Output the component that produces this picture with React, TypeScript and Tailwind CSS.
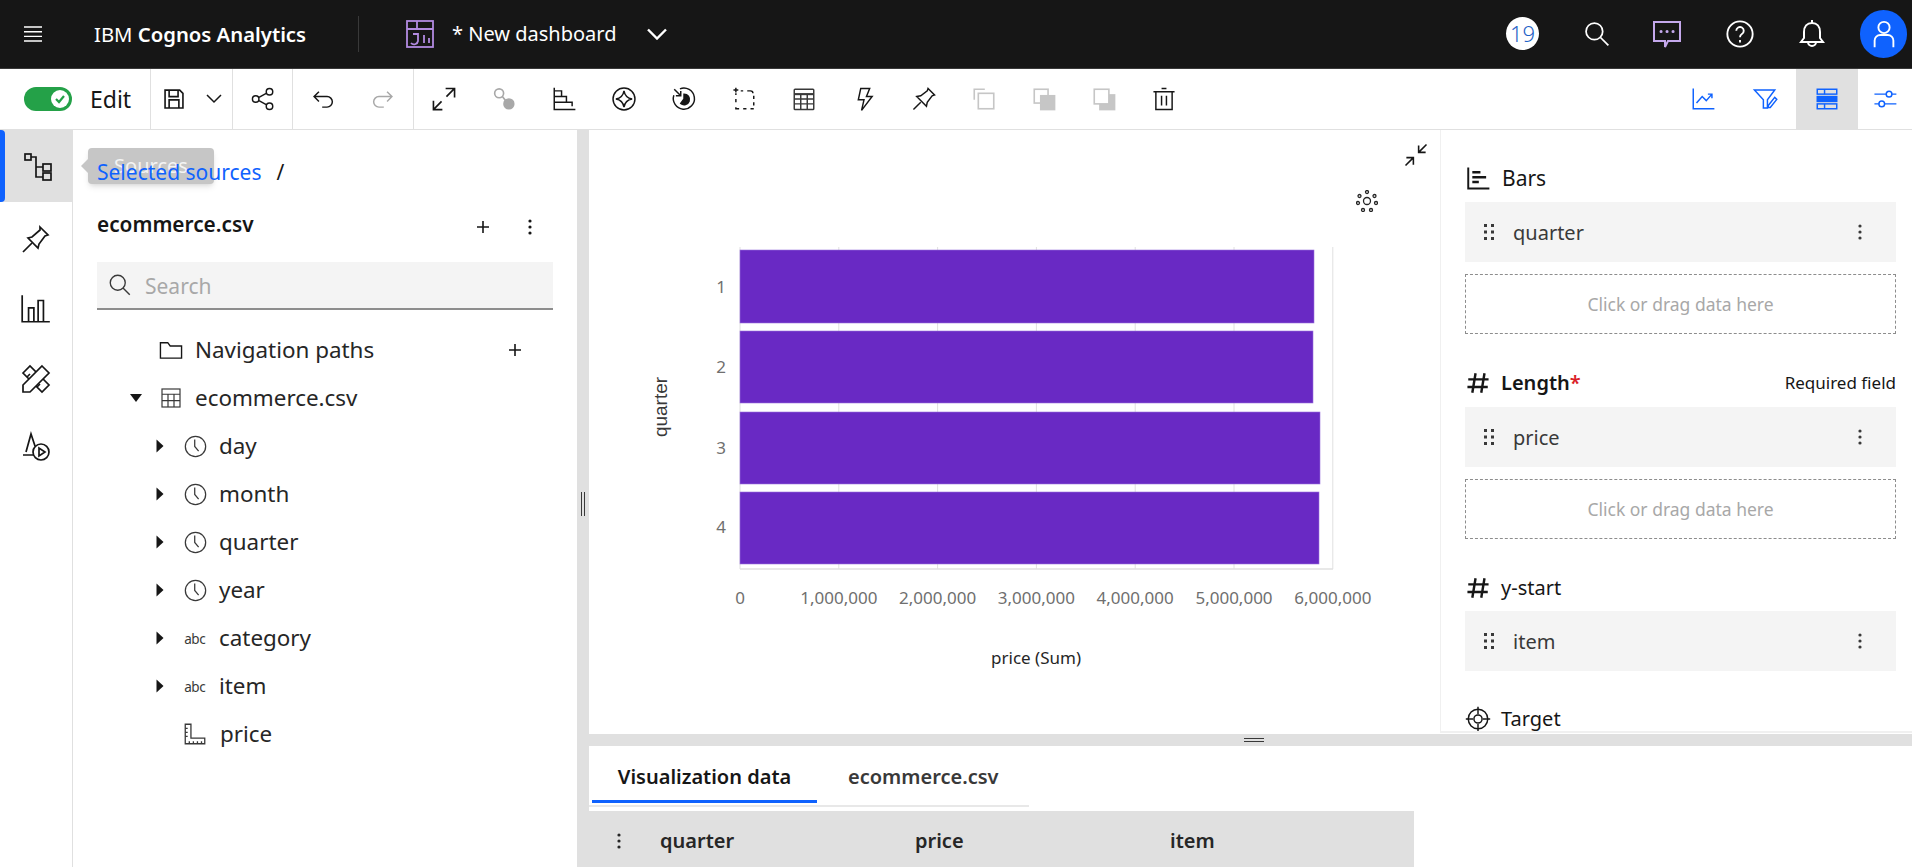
import type { ReactNode } from "react";

function Ico({ size = 26, className = "", sw = 2, children }: { size?: number; className?: string; sw?: number; children: ReactNode }) {
  return (
    <svg width={size} height={size} viewBox="0 0 32 32" fill="none" stroke="currentColor" strokeWidth={sw} className={className}>
      {children}
    </svg>
  );
}

function ToolBtn({ children, active, wide }: { children: ReactNode; active?: boolean; wide?: boolean }) {
  return <div className={`${wide ? "w-[62px]" : "w-[60px]"} h-[60px] shrink-0 flex items-center justify-center ${active ? "bg-[#e0e0e0]" : ""}`}>{children}</div>;
}

const Kebab = ({ className = "" }: { className?: string }) => (
  <svg width="4" height="16" viewBox="0 0 4 16" fill="currentColor" className={className}>
    <circle cx="2" cy="2" r="1.6" />
    <circle cx="2" cy="8" r="1.6" />
    <circle cx="2" cy="14" r="1.6" />
  </svg>
);

const Plus = () => (
  <svg width="14" height="14" viewBox="0 0 14 14" stroke="currentColor" strokeWidth="1.6">
    <path d="M7 1v12M1 7h12" />
  </svg>
);

const Hash = () => (
  <Ico size={26} sw={3}>
    <path d="M13 4 9 28M24 4l-4 24M4 11.500h25M3 21h25" />
  </Ico>
);

const Clock = () => (
  <Ico size={25} sw={1.6} className="text-[#393939]">
    <circle cx="16" cy="16" r="13" />
    <path d="M15 7v9l5 6" />
  </Ico>
);

function Caret({ open }: { open?: boolean }) {
  return (
    <svg width="16" height="16" viewBox="0 0 16 16" fill="#161616">
      {open ? <path d="M2 4h12l-6 8z" /> : <path d="M4.500 1.500v13l7-6.500z" />}
    </svg>
  );
}

const Abc = () => <span className="text-[15px] leading-none text-[#393939] tracking-[-0.5px] scale-x-90">abc</span>;

const RulerIcon = () => (
  <Ico size={26} sw={1.6} className="text-[#393939]">
    <path d="M4 4h7v17h17v7H4z" />
    <path d="M4 9h3M4 14h3M4 19h3M9 28v-3M14 28v-3M19 28v-3M24 28v-3" />
  </Ico>
);

const TableIcon = () => (
  <Ico size={24} sw={1.6} className="text-[#393939]">
    <rect x="4" y="4" width="24" height="24" />
    <path d="M4 11h24M4 19.500h24M12 11v17M20 11v17" />
  </Ico>
);

function TreeRow({ indent, caret, icon, label, labelClass, right }: { indent: string; caret?: "open" | "closed"; icon: ReactNode; label: string; labelClass?: string; right?: ReactNode }) {
  return (
    <div className={`h-12 flex items-center ${indent}`}>
      <div className="w-4 flex justify-center">{caret && <Caret open={caret === "open"} />}</div>
      <div className="w-[26px] ml-[14px] flex justify-center">{icon}</div>
      <span className={`text-[22.4px] text-[#262626] ${labelClass ?? "ml-[11px]"}`}>{label}</span>
      {right}
    </div>
  );
}

function FieldCard({ label }: { label: string }) {
  return (
    <div className="h-[60px] bg-[#f4f4f4] flex items-center pl-[19px] pr-[34px] text-[#393939]">
      <svg width="10" height="16" viewBox="0 0 10 16" fill="currentColor">
        <rect x="0" y="0" width="3" height="3" />
        <rect x="7" y="0" width="3" height="3" />
        <rect x="0" y="6.500" width="3" height="3" />
        <rect x="7" y="6.500" width="3" height="3" />
        <rect x="0" y="13" width="3" height="3" />
        <rect x="7" y="13" width="3" height="3" />
      </svg>
      <span className="ml-[19px] pt-[2px] text-[20px]">{label}</span>
      <Kebab className="ml-auto" />
    </div>
  );
}

const DropZone = () => (
  <div className="h-[60px] mt-3 border border-dashed border-[#8d8d8d] flex items-center justify-center text-[17.5px] text-[#a8a8a8]">Click or drag data here</div>
);

const bars = [
  { y: 120, h: 73, w: 574, label: "1", labelY: 163 },
  { y: 201, h: 72, w: 573, label: "2", labelY: 243 },
  { y: 282, h: 72, w: 580, label: "3", labelY: 324 },
  { y: 362, h: 72, w: 579, label: "4", labelY: 403 },
];
const ticks = ["0", "1,000,000", "2,000,000", "3,000,000", "4,000,000", "5,000,000", "6,000,000"];

function BarChart() {
  return (
    <svg width="852" height="604" className="block" fontFamily="'Noto Sans', sans-serif">
      {ticks.map((t, i) => {
        const x = 151 + i * 98.8;
        return (
          <g key={t}>
            <line x1={x} x2={x} y1={117} y2={439} stroke="#e0e0e0" />
            <text x={x} y={474} textAnchor="middle" fontSize="17" fill="#6f6f6f">{t}</text>
          </g>
        );
      })}
      <line x1={151} x2={744} y1={439} y2={439} stroke="#e0e0e0" strokeWidth="1.500" />
      {bars.map((b) => (
        <g key={b.label}>
          <rect x={151} y={b.y} width={b.w} height={b.h} fill="#6929c4" stroke="#9a72dc" strokeWidth="0.600" />
          <text x={137} y={b.labelY} textAnchor="end" fontSize="17" fill="#6f6f6f">{b.label}</text>
        </g>
      ))}
      <text x={447} y={534} textAnchor="middle" fontSize="17" fill="#262626">price (Sum)</text>
      <text transform="translate(78 277) rotate(-90)" textAnchor="middle" fontSize="19" fill="#393939" fontFamily="'Liberation Sans', sans-serif">quarter</text>
    </svg>
  );
}

export default function App() {
  return (
    <div className="h-screen w-[1912px] overflow-hidden flex flex-col bg-white text-[#161616] font-['Noto_Sans',sans-serif]">
      {/* Top bar */}
      <header className="h-[69px] shrink-0 bg-[#161616] border-b border-[#393939] flex items-center text-white">
        <svg width="18" height="16" viewBox="0 0 18 16" stroke="currentColor" strokeWidth="1.400" className="ml-6">
          <path d="M0 1h18M0 5.700h18M0 10.400h18M0 15h18" />
        </svg>
        <div className="ml-[52px] text-[20.3px] w-[212px] whitespace-nowrap">IBM <span className="font-semibold">Cognos Analytics</span></div>
        <div className="ml-[52px] w-px h-9 bg-[#393939]" />
        <Ico size={32} className="ml-[45px] text-[#b28ae0]" sw={1.8}>
          <rect x="3" y="3" width="26" height="26" />
          <path d="M3 11h26M13 3v8M9 16h5v7a4 4 0 0 1-7 2M20 17v8M25 20v5" />
        </Ico>
        <span className="ml-[16px] text-[20px] whitespace-nowrap">* New dashboard</span>
        <svg width="20" height="12" viewBox="0 0 20 12" fill="none" stroke="currentColor" strokeWidth="2.400" className="ml-[31px]">
          <path d="M1 1.500 10 10.500 19 1.500" />
        </svg>
        <div className="ml-auto flex items-center">
          <div className="w-[33px] h-[33px] -mt-[2px] rounded-full bg-white text-[#1f63c7] text-[22px] font-light flex items-center justify-center">19</div>
          <Ico size={28} className="ml-[44px]">
            <circle cx="13" cy="13" r="9.500" />
            <path d="m20 20 9 9" />
          </Ico>
          <Ico size={32} className="ml-[40px] text-[#c4a8ec]">
            <path d="M3 4h26v19H17l-3 6v-6H3z" />
            <path d="M10 13.500h.1M16 13.500h.1M22 13.500h.1" strokeWidth="3" strokeLinecap="round" />
          </Ico>
          <Ico size={30} className="ml-[42px]">
            <circle cx="16" cy="16" r="13.500" />
            <path d="M12 12.500a4 4 0 1 1 6 3.500c-1.500 1-2 1.700-2 3.500M16 22.500v2.500" />
          </Ico>
          <Ico size={32} className="ml-[41px]">
            <path d="M16 2v3M16 5c-5 0-8 3.500-8 9v6l-3 4h22l-3-4v-6c0-5.500-3-9-8-9z" />
            <path d="M12 24a4 4 0 0 0 8 0" />
          </Ico>
          <div className="ml-[32px] mr-[5px] w-[47px] h-[48px] rounded-full bg-[#0f62fe] flex items-center justify-center">
            <Ico size={30}>
              <circle cx="16" cy="9" r="6" />
              <path d="M6 30v-7a6 6 0 0 1 6-6h8a6 6 0 0 1 6 6v7" />
            </Ico>
          </div>
        </div>
      </header>

      {/* Toolbar */}
      <div className="h-[61px] shrink-0 border-b border-[#e0e0e0] flex items-stretch text-[#161616]">
        <div className="w-[151px] shrink-0 border-r border-[#e0e0e0] flex items-center pl-6">
          <div className="w-12 h-6 rounded-full bg-[#24a148] flex items-center justify-end pr-[3px]">
            <div className="w-[18px] h-[18px] rounded-full bg-white flex items-center justify-center">
              <svg width="12" height="12" viewBox="0 0 12 12" fill="none" stroke="#24a148" strokeWidth="2.200">
                <path d="m2 6 3 3 5-6" />
              </svg>
            </div>
          </div>
          <span className="ml-[18px] text-[23px]">Edit</span>
        </div>
        <div className="w-[82px] shrink-0 border-r border-[#e0e0e0] flex items-center">
          <Ico className="ml-[10px]">
            <path d="M5 5h18l4 4v18H5z" />
            <path d="M10 5v8h11V5M10 27V17h12v10" />
          </Ico>
          <svg width="16" height="10" viewBox="0 0 16 10" fill="none" stroke="currentColor" strokeWidth="1.500" className="ml-[19px]">
            <path d="m1 1 7 7 7-7" />
          </svg>
        </div>
        <div className="w-[60px] shrink-0 border-r border-[#e0e0e0] flex items-center justify-center">
          <Ico sw={1.8}>
            <circle cx="24" cy="7" r="4" />
            <circle cx="7" cy="16" r="4" />
            <circle cx="24" cy="25" r="4" />
            <path d="m11 14 9-5M11 18l9 5" />
          </Ico>
        </div>
        <div className="w-[121px] shrink-0 border-r border-[#e0e0e0] flex items-center">
          <ToolBtn>
            <Ico sw={1.8}>
              <path d="M11 7 5 13l6 6M5 13h16a6 6 0 0 1 0 13h-6" />
            </Ico>
          </ToolBtn>
          <ToolBtn>
            <Ico sw={1.8} className="text-[#a8a8a8]">
              <path d="m21 7 6 6-6 6M27 13H11a6 6 0 0 0 0 13h6" />
            </Ico>
          </ToolBtn>
        </div>
        <ToolBtn>
          <Ico>
            <path d="m3 29 10-10M19 13 29 3M18 3h11v11M3 18v11h11" />
          </Ico>
        </ToolBtn>
        <ToolBtn>
          <Ico className="text-[#a8a8a8]">
            <circle cx="10" cy="9" r="5.500" />
            <path d="m14 13 4 5" />
            <circle cx="22" cy="22" r="6" fill="currentColor" />
          </Ico>
        </ToolBtn>
        <ToolBtn>
          <Ico sw={1.8}>
            <path d="M4 2v27h26" />
            <path d="M4 6h9v7H4M4 13h15v7H4M4 20h22v5" />
          </Ico>
        </ToolBtn>
        <ToolBtn>
          <Ico sw={1.8}>
            <circle cx="16" cy="16" r="13.500" />
            <path d="M16 6c1 6 4 9 10 10-6 1-9 4-10 10-1-6-4-9-10-10 6-1 9-4 10-10z" />
          </Ico>
        </ToolBtn>
        <ToolBtn>
          <Ico sw={1.8}>
            <path d="M11 3.500a13 13 0 1 1-7.500 8" />
            <path d="m4 4 8 8M12 6v6H6" />
            <path d="M16 10a6.500 6.500 0 1 1-4 11.500L16 16z" fill="currentColor" />
          </Ico>
        </ToolBtn>
        <ToolBtn>
          <Ico sw={1.8}>
            <path d="M3 5h6M6 2v6" />
            <path d="M12 6h3M20 6h4a3 3 0 0 1 3 3M28 12v4M28 20v4M28 28h-4M19 28h-4M10 28H6v-2M6 20v-4M6 11V9" />
          </Ico>
        </ToolBtn>
        <ToolBtn>
          <Ico sw={1.8} className="text-[#393939]">
            <rect x="4" y="4" width="24" height="25" rx="1" />
            <path d="M4 10h24" strokeWidth="2.600" />
            <path d="M4 16h24M4 22h24M12 10v19M20 10v19" />
          </Ico>
        </ToolBtn>
        <ToolBtn>
          <Ico sw={1.8}>
            <path d="M12 3h11l-4 10h7L13 30l3-13h-7z" />
          </Ico>
        </ToolBtn>
        <ToolBtn>
          <Ico sw={1.8}>
            <path d="m21 3 8 8-3 1-6 8-1 5-12-12 5-1 8-6z" />
            <path d="M3 29l9-9" />
          </Ico>
        </ToolBtn>
        <ToolBtn>
          <Ico className="text-[#c6c6c6]">
            <path d="M4 17V4h13" />
            <rect x="9" y="9" width="19" height="19" />
          </Ico>
        </ToolBtn>
        <ToolBtn>
          <Ico className="text-[#c6c6c6]">
            <rect x="4" y="4" width="17" height="17" />
            <rect x="12" y="12" width="17" height="17" fill="currentColor" />
          </Ico>
        </ToolBtn>
        <ToolBtn>
          <Ico className="text-[#c6c6c6]">
            <rect x="11" y="11" width="18" height="18" fill="currentColor" />
            <rect x="4" y="4" width="18" height="18" fill="#fff" />
          </Ico>
        </ToolBtn>
        <ToolBtn>
          <Ico sw={1.8}>
            <path d="M3 7h26M13 3h6M6 7v22h20V7M13 12v12M19 12v12" />
          </Ico>
        </ToolBtn>
        <div className="ml-auto flex items-center text-[#0f62fe]">
          <ToolBtn wide>
            <Ico sw={1.8}>
              <path d="M4 3v25h26" />
              <path d="m8 21 7-8 5 5 7-8M22 10h5v5" />
            </Ico>
          </ToolBtn>
          <ToolBtn wide>
            <Ico sw={1.8}>
              <path d="M3 5h25l-9 12v10h-5V17z" />
              <path d="m20 24 8-10 2.500 2.500-8 10H20z" fill="#fff" />
            </Ico>
          </ToolBtn>
          <ToolBtn wide active>
            <Ico sw={1.8}>
              <rect x="4" y="4" width="24" height="6" />
              <rect x="4" y="13" width="24" height="6" fill="currentColor" />
              <rect x="4" y="22" width="24" height="6" />
              <path d="M13 4v6M13 22v6" />
            </Ico>
          </ToolBtn>
          <div className="w-[54px] h-[60px] flex items-center justify-center">
            <Ico sw={1.8}>
              <path d="M3 10h15M24 10h6M3 22h6M15 22h15" />
              <circle cx="21" cy="10" r="3.500" />
              <circle cx="12" cy="22" r="3.500" />
            </Ico>
          </div>
        </div>
      </div>

      <div className="flex-1 flex min-h-0">
        {/* Left rail */}
        <nav className="w-[73px] shrink-0 border-r border-[#e0e0e0] flex flex-col">
          <div className="relative h-[72px] bg-[#e0e0e0] flex items-center justify-center pl-[5px]">
            <div className="absolute left-0 top-0 h-full w-[5px] bg-[#0f62fe] rounded-r-sm" />
            <Ico size={32} sw={1.7}>
              <rect x="2" y="4" width="6" height="6" />
              <rect x="20" y="14" width="8" height="7" />
              <rect x="20" y="23" width="8" height="7" />
              <path d="M8 7h5v20h7M13 17h7" />
            </Ico>
          </div>
          <div className="h-[70px] mt-[2px] flex items-center justify-center">
            <Ico size={32} sw={1.7}>
              <path d="m20 4 8 8-3 1-6 8-1 4-10-10 4-1 8-7z" />
              <path d="m3 29 9-9" />
            </Ico>
          </div>
          <div className="h-[70px] flex items-center justify-center">
            <Ico size={34} sw={1.6}>
              <path d="M3 3v25h26M9 28V15h5v13M18 28V8h5v20" />
            </Ico>
          </div>
          <div className="h-[70px] flex items-center justify-center">
            <Ico size={32} sw={1.7}>
              <path d="M3 10 10 3l19 19-7 7zM7 14l3-3M12 19l3-3M17 24l3-3" />
              <path d="M22 3l7 7-19 19H3v-7z" fill="#fff" />
            </Ico>
          </div>
          <div className="h-[70px] -mt-[3px] flex items-center justify-center">
            <Ico size={32} sw={1.7}>
              <path d="M3 25h12M6 22 11 4l4 12" />
              <circle cx="21" cy="22" r="8" fill="#fff" />
              <path d="M19 18v8l6-4z" />
            </Ico>
          </div>
        </nav>

        {/* Source panel */}
        <aside className="relative w-[504px] shrink-0 pl-6 pr-6 flex flex-col">
          <div className="absolute left-[15px] top-[18px] w-[126px] h-9 bg-[#c6c6c6] rounded-sm shadow-md flex items-center justify-center text-[20px] text-[#f4f4f4]">
            <div className="absolute -left-[7px] top-[11px] w-0 h-0 border-y-[7px] border-y-transparent border-r-[7px] border-r-[#c6c6c6]" />
            Sources
          </div>
          <div className="relative h-10 mt-[23px] flex items-center text-[21px]">
            <span className="text-[#0f62fe]">Selected sources</span>
            <span className="ml-[15px]">/</span>
          </div>
          <div className="h-10 mt-3 flex items-center">
            <span className="text-[20.8px] font-semibold">ecommerce.csv</span>
            <div className="ml-auto mr-[21px] pt-[4px] flex items-center gap-[38px]">
              <Plus />
              <Kebab />
            </div>
          </div>
          <div className="h-12 mt-[17px] bg-[#f4f4f4] border-b-2 border-[#8d8d8d] flex items-center pl-[11px]">
            <Ico size={24} sw={1.8} className="text-[#393939]">
              <circle cx="13" cy="13" r="10" />
              <path d="m20 20 9 9" />
            </Ico>
            <span className="ml-[13px] pt-[3px] text-[21px] text-[#a8a8a8]">Search</span>
          </div>
          <div className="mt-4">
            <TreeRow
              indent="pl-[31px]"
              icon={
                <Ico size={26} sw={1.700}>
                  <path d="M3 7h9l3 4h14v15H3z" />
                </Ico>
              }
              label="Navigation paths"
              right={
                <div className="ml-auto mr-[31px]">
                  <Plus />
                </div>
              }
            />
            <TreeRow indent="pl-[31px]" caret="open" icon={<TableIcon />} label="ecommerce.csv" />
            <TreeRow indent="pl-[55px]" caret="closed" icon={<Clock />} label="day" />
            <TreeRow indent="pl-[55px]" caret="closed" icon={<Clock />} label="month" />
            <TreeRow indent="pl-[55px]" caret="closed" icon={<Clock />} label="quarter" />
            <TreeRow indent="pl-[55px]" caret="closed" icon={<Clock />} label="year" />
            <TreeRow indent="pl-[55px]" caret="closed" icon={<Abc />} label="category" />
            <TreeRow indent="pl-[55px]" caret="closed" icon={<Abc />} label="item" />
            <TreeRow indent="pl-[55px]" icon={<RulerIcon />} label="price" labelClass="ml-[12px]" />
          </div>
        </aside>

        {/* Vertical splitter */}
        <div className="w-3 shrink-0 bg-[#e0e0e0] pt-[362px] pl-[4px]">
          <div className="w-[4px] h-6 border-x border-[#393939]" />
        </div>

        <div className="flex-1 min-w-0 flex flex-col">
          <div className="h-[604px] shrink-0 flex">
            {/* Chart */}
            <div className="relative w-[851px] shrink-0 overflow-hidden">
              <BarChart />
              <div className="absolute left-[813px] top-[11px]">
                <Ico size={28} sw={1.800}>
                  <path d="m4 28 9-9M13 27v-8H5M28 4l-9 9M19 5v8h8" />
                </Ico>
              </div>
              <div className="absolute left-[767px] top-[60px]">
                <svg width="22" height="22" viewBox="0 0 22 22" fill="none" stroke="#262626" strokeWidth="1.300">
                  <circle cx="11" cy="11" r="3.500" />
                  <circle cx="11" cy="2" r="1.500" />
                  <circle cx="3.500" cy="6" r="1.500" />
                  <circle cx="18.500" cy="6" r="1.500" />
                  <circle cx="2" cy="13" r="1.500" />
                  <circle cx="20" cy="13" r="1.500" />
                  <circle cx="7" cy="20" r="1.500" />
                  <circle cx="15" cy="20" r="1.500" />
                </svg>
              </div>
            </div>

            {/* Properties */}
            <section className="flex-1 min-w-0 h-[603px] overflow-hidden border-l border-b-2 border-[#f0f0f0] pl-6 pr-4 pt-7">
              <div className="h-10 flex items-center text-[21px]">
                <Ico size={26}>
                  <path d="M4 3v26h26" strokeWidth="2.400" />
                  <path d="M9 9h10M9 15h17M9 21h8" strokeWidth="3" />
                </Ico>
                <span className="ml-[11px] pt-[2px]">Bars</span>
              </div>
              <div className="mt-1">
                <FieldCard label="quarter" />
                <DropZone />
              </div>
              <div className="h-10 mt-[29px] flex items-center text-[20px]">
                <Hash />
                <span className="ml-[10px] font-semibold">Length<span className="text-[#da1e28]">*</span></span>
                <span className="ml-auto text-[17px]">Required field</span>
              </div>
              <div className="mt-1">
                <FieldCard label="price" />
                <DropZone />
              </div>
              <div className="h-10 mt-[29px] flex items-center text-[20px]">
                <Hash />
                <span className="ml-[10px]">y-start</span>
              </div>
              <div className="mt-[3px]">
                <FieldCard label="item" />
              </div>
              <div className="h-10 mt-[28px] flex items-center text-[20px]">
                <Ico size={26} sw={1.800}>
                  <circle cx="16" cy="16" r="12" />
                  <circle cx="16" cy="16" r="5" />
                  <path d="M16 1v9M16 22v9M1 16h9M22 16h9" />
                </Ico>
                <span className="ml-[10px]">Target</span>
              </div>
            </section>
          </div>

          {/* Horizontal splitter */}
          <div className="h-3 shrink-0 bg-[#e0e0e0] pt-[4px] pl-[655px]">
            <div className="w-5 h-[4px] border-y border-[#393939]" />
          </div>

          {/* Data tabs */}
          <div className="h-[65px] shrink-0 w-[440px] flex flex-col">
            <div className="flex h-[57px] pl-[3px]">
              <div className="w-[225px] h-[57px] pt-[7px] border-b-[3px] border-[#0f62fe] flex items-center justify-center font-semibold text-[20px]">Visualization data</div>
              <div className="pl-[31px] h-[54px] pt-[7px] flex items-center font-semibold text-[20px] text-[#393939]">ecommerce.csv</div>
            </div>
            <div className="mt-[2px] h-[2px] bg-[#e8e8e8]" />
          </div>
          <div className="flex-1 w-[825px] bg-[#e0e0e0] pt-[4px] flex items-center text-[20px] font-semibold text-[#262626]">
            <Kebab className="ml-[28px]" />
            <span className="ml-[39px] w-[255px]">quarter</span>
            <span className="w-[255px]">price</span>
            <span>item</span>
          </div>
        </div>
      </div>
    </div>
  );
}
